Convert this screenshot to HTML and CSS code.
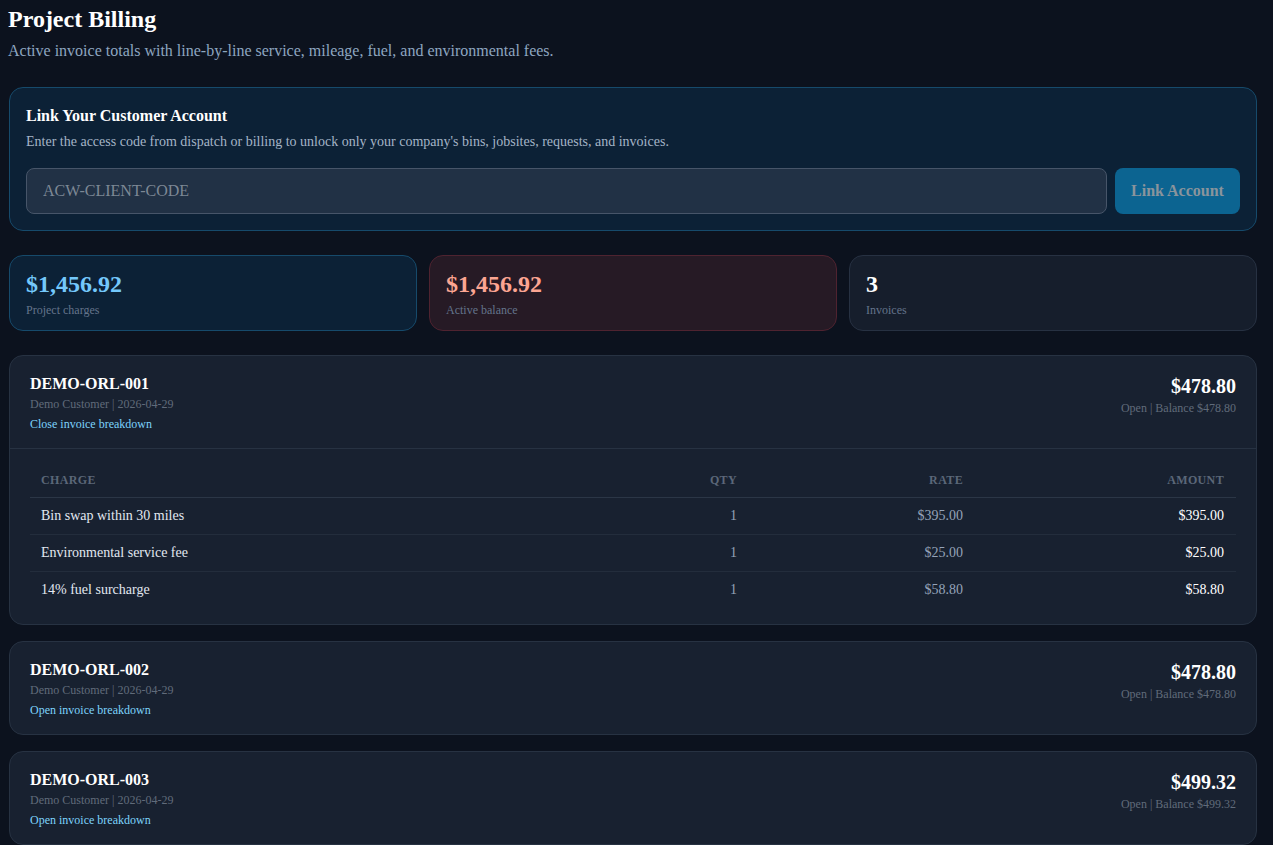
FILE: index.html
```html
<!DOCTYPE html>
<html>

<head>
    <meta charset="UTF-8">
    <title>Project Billing</title>
    <link rel="stylesheet" href="styles.css">
</head>

<body>
    <div class="page">
        <h1>Project Billing</h1>
        <p class="subtitle">Active invoice totals with line-by-line service, mileage, fuel, and environmental fees.</p>

        <section class="link-panel">
            <h2>Link Your Customer Account</h2>
            <p>Enter the access code from dispatch or billing to unlock only your company's bins, jobsites, requests, and invoices.</p>
            <form class="link-form">
                <input type="text" placeholder="ACW-CLIENT-CODE">
                <button type="button">Link Account</button>
            </form>
        </section>

        <section class="stats">
            <div class="stat stat-blue">
                <div class="stat-value">$1,456.92</div>
                <div class="stat-label">Project charges</div>
            </div>
            <div class="stat stat-red">
                <div class="stat-value">$1,456.92</div>
                <div class="stat-label">Active balance</div>
            </div>
            <div class="stat">
                <div class="stat-value">3</div>
                <div class="stat-label">Invoices</div>
            </div>
        </section>

        <section class="invoices">
            <article class="invoice">
                <header class="invoice-head">
                    <div>
                        <div class="invoice-id">DEMO-ORL-001</div>
                        <div class="invoice-meta">Demo Customer | 2026-04-29</div>
                        <a class="invoice-toggle">Close invoice breakdown</a>
                    </div>
                    <div class="invoice-totals">
                        <div class="invoice-total">$478.80</div>
                        <div class="invoice-meta">Open | Balance $478.80</div>
                    </div>
                </header>
                <div class="invoice-body">
                    <table>
                        <thead>
                            <tr>
                                <th class="col-charge">Charge</th>
                                <th class="col-qty">Qty</th>
                                <th class="col-rate">Rate</th>
                                <th class="col-amount">Amount</th>
                            </tr>
                        </thead>
                        <tbody>
                            <tr>
                                <td class="col-charge">Bin swap within 30 miles</td>
                                <td class="col-qty">1</td>
                                <td class="col-rate">$395.00</td>
                                <td class="col-amount">$395.00</td>
                            </tr>
                            <tr>
                                <td class="col-charge">Environmental service fee</td>
                                <td class="col-qty">1</td>
                                <td class="col-rate">$25.00</td>
                                <td class="col-amount">$25.00</td>
                            </tr>
                            <tr>
                                <td class="col-charge">14% fuel surcharge</td>
                                <td class="col-qty">1</td>
                                <td class="col-rate">$58.80</td>
                                <td class="col-amount">$58.80</td>
                            </tr>
                        </tbody>
                    </table>
                </div>
            </article>

            <article class="invoice">
                <header class="invoice-head">
                    <div>
                        <div class="invoice-id">DEMO-ORL-002</div>
                        <div class="invoice-meta">Demo Customer | 2026-04-29</div>
                        <a class="invoice-toggle">Open invoice breakdown</a>
                    </div>
                    <div class="invoice-totals">
                        <div class="invoice-total">$478.80</div>
                        <div class="invoice-meta">Open | Balance $478.80</div>
                    </div>
                </header>
            </article>

            <article class="invoice">
                <header class="invoice-head">
                    <div>
                        <div class="invoice-id">DEMO-ORL-003</div>
                        <div class="invoice-meta">Demo Customer | 2026-04-29</div>
                        <a class="invoice-toggle">Open invoice breakdown</a>
                    </div>
                    <div class="invoice-totals">
                        <div class="invoice-total">$499.32</div>
                        <div class="invoice-meta">Open | Balance $499.32</div>
                    </div>
                </header>
            </article>
        </section>
    </div>
</body>

</html>
```

FILE: styles.css
```css
* {
    box-sizing: border-box;
}

html,
body {
    height: 100%;
}

body {
    margin: 0;
    overflow: hidden;
    background: #0c121e;
    color: #fff;
    font-family: "Liberation Serif", "Times New Roman", serif;
}

.page {
    padding: 6px 16px 0 9px;
}

h1 {
    margin: 0 0 0 -1px;
    font-size: 24px;
    line-height: 27px;
}

.subtitle {
    margin: 9px 0 27px -1px;
    font-size: 16px;
    line-height: 18px;
    color: #8ea6c0;
}

.link-panel {
    height: 144px;
    padding: 19px 16px 16px;
    background: #0c2136;
    border: 1px solid #164a6b;
    border-radius: 14px;
}

.link-panel h2 {
    margin: 0;
    font-size: 16px;
    line-height: 18px;
}

.link-panel p {
    margin: 9px 0 18px;
    font-size: 14px;
    line-height: 16px;
    color: #a4b4c6;
}

.link-form {
    display: flex;
    gap: 8px;
}

.link-form input {
    flex: 1;
    height: 46px;
    padding: 0 16px;
    background: #213145;
    border: 1px solid #475569;
    border-radius: 8px;
    color: #fff;
    font-family: inherit;
    font-size: 16px;
}

.link-form input::placeholder {
    color: #7d8895;
    opacity: 1;
}

.link-form button {
    width: 125px;
    height: 46px;
    background: #0c6491;
    border: 0;
    border-radius: 8px;
    color: #8a949c;
    font-family: inherit;
    font-size: 16px;
    font-weight: bold;
}

.stats {
    display: grid;
    grid-template-columns: repeat(3, 1fr);
    gap: 12px;
    margin-top: 24px;
}

.stat {
    height: 76px;
    padding: 15px 16px 0;
    background: #161e2c;
    border: 1px solid #273142;
    border-radius: 14px;
}

.stat-blue {
    background: #0c2136;
    border-color: #164a6b;
}

.stat-red {
    background: #261a25;
    border-color: #4f2330;
}

.stat-value {
    font-size: 24px;
    font-weight: bold;
    line-height: 27px;
}

.stat-blue .stat-value {
    color: #74c8fb;
}

.stat-red .stat-value {
    color: #fca592;
}

.stat-label {
    margin-top: 5px;
    font-size: 12px;
    line-height: 14px;
    color: #64748b;
}

.invoices {
    display: flex;
    flex-direction: column;
    gap: 16px;
    margin-top: 24px;
}

.invoice {
    background: #182130;
    border: 1px solid #273242;
    border-radius: 14px;
}

.invoice-head {
    display: flex;
    justify-content: space-between;
    height: 92px;
    padding: 19px 20px 0;
}

.invoice-id {
    font-size: 16px;
    font-weight: bold;
    line-height: 18px;
}

.invoice-meta {
    margin-top: 4px;
    font-size: 12px;
    line-height: 14px;
    color: #606b7a;
}

.invoice-toggle {
    display: block;
    margin-top: 6px;
    font-size: 12px;
    line-height: 14px;
    color: #7dd3fc;
}

.invoice-totals {
    text-align: right;
}

.invoice-total {
    font-size: 20px;
    font-weight: bold;
    line-height: 23px;
}

.invoice-totals .invoice-meta {
    margin-top: 3px;
}

.invoice-body {
    padding: 14px 20px 16px;
    border-top: 1px solid #273242;
}

table {
    width: 100%;
    table-layout: fixed;
    border-collapse: collapse;
}

th,
td {
    height: 37px;
    padding: 0 12px;
    font-size: 14px;
    font-weight: normal;
    text-align: left;
    color: #e2e8f0;
    border-bottom: 1px solid #232d3c;
}

th {
    height: 34px;
    padding-top: 2px;
    font-size: 12px;
    font-weight: bold;
    letter-spacing: 0.36px;
    text-transform: uppercase;
    color: #5b6778;
    border-bottom-color: #2b3646;
}

tbody tr:last-child td {
    border-bottom: 0;
}

.col-charge {
    padding-left: 11px;
}

.col-qty,
.col-rate,
.col-amount {
    text-align: right;
}

.col-rate {
    width: 226px;
}

.col-amount {
    width: 261px;
}

td.col-qty,
td.col-rate {
    color: #94a3b8;
}

td.col-amount {
    color: #fff;
}
```
